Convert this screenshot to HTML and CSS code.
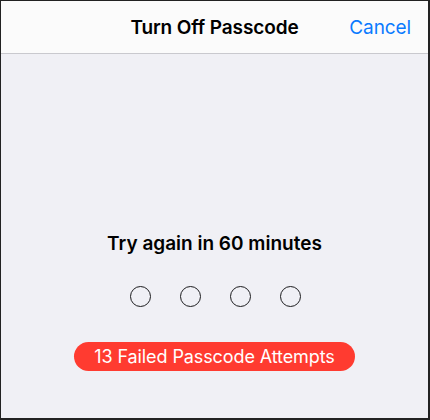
FILE: index.html
```html
<!DOCTYPE html>
<html>
<head>
<meta charset="utf-8">
<link rel="stylesheet" href="styles.css">
</head>
<body>
<div class="frame">
  <header class="nav">
    <div class="nav-side"></div>
    <h1 class="nav-title">Turn Off Passcode</h1>
    <div class="nav-side nav-right"><span class="cancel">Cancel</span></div>
  </header>
  <main class="content">
    <p class="message">Try again in 60 minutes</p>
    <div class="dots">
      <span class="dot"></span>
      <span class="dot"></span>
      <span class="dot"></span>
      <span class="dot"></span>
    </div>
    <div class="failed">13 Failed Passcode Attempts</div>
  </main>
</div>
</body>
</html>
```

FILE: styles.css
```css
html, body {
  margin: 0;
  padding: 0;
  height: 100%;
}
body {
  font-family: Inter, "Liberation Sans", sans-serif;
  -webkit-font-smoothing: antialiased;
}
.frame {
  box-sizing: border-box;
  width: 430px;
  height: 420px;
  border-style: solid;
  border-color: #222;
  border-width: 1px 2px 2px 1px;
  display: flex;
  flex-direction: column;
  background: #f0f0f5;
  overflow: hidden;
}
.nav {
  height: 52px;
  flex: none;
  background: #fbfbfb;
  border-bottom: 1px solid #c9c9ce;
  display: grid;
  grid-template-columns: 1fr auto 1fr;
  align-items: center;
}
.nav-title {
  margin: 0;
  font-size: 19px;
  font-weight: 600;
  color: #000;
  letter-spacing: -0.1px;
}
.nav-right {
  display: flex;
  justify-content: flex-end;
  padding-right: 17px;
}
.cancel {
  font-size: 19px;
  color: #0a7aff;
  font-weight: 400;
  letter-spacing: -0.1px;
}
.content {
  flex: 1;
  display: flex;
  flex-direction: column;
  align-items: center;
  padding-top: 178px;
}
.message {
  margin: 0;
  font-size: 19px;
  font-weight: 600;
  color: #000;
  line-height: 24px;
}
.dots {
  display: flex;
  gap: 29px;
  margin-top: 30px;
  padding-left: 1px;
}
.dot {
  box-sizing: border-box;
  width: 21px;
  height: 21px;
  border: 1.4px solid #1c1c1e;
  border-radius: 50%;
}
.failed {
  margin-top: 35px;
  height: 29px;
  width: 281px;
  border-radius: 15px;
  background: #ff3b30;
  color: #fff;
  font-size: 18px;
  letter-spacing: -0.1px;
  display: flex;
  align-items: center;
  justify-content: center;
}
```
